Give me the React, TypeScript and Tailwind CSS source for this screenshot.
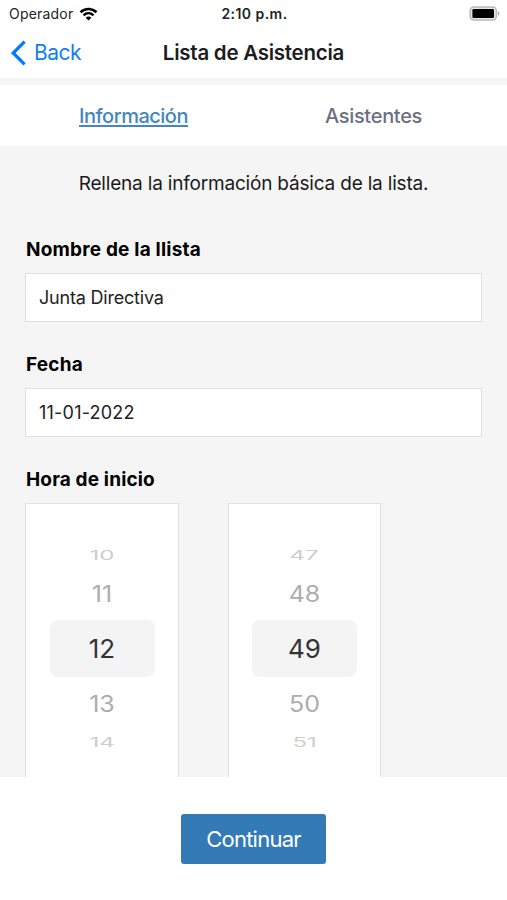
import clsx from "clsx";

type Field = { label: string; value: string; className?: string };

const fields: Field[] = [
  { label: "Nombre de la llista", value: "Junta Directiva", className: "tracking-[-0.2px]" },
  { label: "Fecha", value: "11-01-2022", className: "tracking-[0.22px]" },
];

const hours = ["10", "11", "12", "13", "14"];
const minutes = ["47", "48", "49", "50", "51"];

// height and vertical squash of each wheel row, from top to bottom
const rowStyles = [
  "h-[26px] text-[25px] text-[#cdcdcd] scale-x-[0.96] scale-y-[0.5]",
  "h-[52px] text-[25px] text-[#adadad] scale-y-[0.9]",
  "h-[57px] text-[26px] text-[#333]",
  "h-[54px] text-[25px] text-[#adadad] scale-y-[0.9]",
  "h-[22px] text-[25px] text-[#cdcdcd] scale-x-[0.96] scale-y-[0.5]",
];

function StatusBar() {
  return (
    <div className="grid h-7 grid-cols-[1fr_auto_1fr] items-center pl-[9px] pr-[7px] text-[14px] leading-none text-[#222]">
      <div className="flex items-center gap-[6px]">
        <span className="tracking-[0.2px]">Operador</span>
        <svg className="-mt-px" width="19" height="14" viewBox="0 0 18 14" fill="none">
          <path d="M1 5.2C5.5 .9 12.5 .9 17 5.2" stroke="#000" strokeWidth="2.6" />
          <path d="M4 8.3C6.9 5.6 11.1 5.6 14 8.3" stroke="#000" strokeWidth="2.4" />
          <path d="M9 13.6 6.1 10.7C7.7 9.2 10.3 9.2 11.9 10.7Z" fill="#000" />
        </svg>
      </div>
      <span className="text-center font-semibold tracking-[0.45px] whitespace-nowrap">2:10 p.m.</span>
      <svg className="-mt-px justify-self-end" width="31" height="15" viewBox="0 0 31 15">
        <rect x="1.2" y="1" width="26.2" height="13" rx="4" fill="#e8e8e8" stroke="#b9b9b9" strokeWidth="1.6" />
        <rect x="3.4" y="3.1" width="21.6" height="8.8" rx="1.2" fill="#000" />
        <path d="M29 5c1.9.9 1.9 3.9 0 4.8Z" fill="#a8a8a8" />
      </svg>
    </div>
  );
}

function NavBar() {
  return (
    <header className="grid h-[50px] grid-cols-[1fr_auto_1fr] items-center px-[10px]">
      <button className="flex items-center gap-[8px] text-[#0f7fee]">
        <svg width="16" height="26" viewBox="0 0 16 26" fill="none">
          <path d="M14.6 1.6 3.2 13l11.4 11.4" stroke="#007aff" strokeWidth="3.2" />
        </svg>
        <span className="pb-px text-[21px] leading-none tracking-[-0.55px]">Back</span>
      </button>
      <h1 className="text-[20.5px] leading-none font-semibold tracking-[-0.25px] text-[#1c1c1e]">
        Lista de Asistencia
      </h1>
    </header>
  );
}

function Wheel({ values }: { values: string[] }) {
  return (
    <div className="flex h-[300px] flex-col items-center border border-[#e0e0e0] bg-white pt-[38px]">
      {values.map((value, i) => (
        <div
          key={value}
          className={clsx("flex w-[105px] shrink-0 items-center justify-center rounded-lg", i === 2 && "bg-[#f4f4f4]")}
        >
          <span className={clsx("flex items-center leading-none", rowStyles[i])}>{value}</span>
        </div>
      ))}
    </div>
  );
}

export default function App() {
  return (
    <div className="flex h-[900px] w-[507px] flex-col overflow-hidden bg-white font-['Inter',sans-serif]">
      <StatusBar />
      <NavBar />
      <nav className="grid h-[68px] grid-cols-[267px_213px] border-t-[7px] border-[#f5f5f5] text-[20px] leading-none font-medium">
        <button className="tracking-[-0.5px] text-[#4287bf] underline decoration-[1.5px] underline-offset-[2px]">
          Información
        </button>
        <button className="tracking-[-0.3px] text-[#6b7080]">Asistentes</button>
      </nav>

      <main className="h-[631px] shrink-0 overflow-hidden bg-[#f5f5f5] px-[25px] pt-[26px]">
        <p className="text-center text-[19px] leading-6 tracking-[-0.19px] text-[#1a1a1a]">
          Rellena la información básica de la lista.
        </p>
        <div className="mt-[42px] flex flex-col gap-[31px]">
          {fields.map((field) => (
            <div key={field.label}>
              <label className="block h-[35px] pl-px text-[19px] leading-6 font-bold tracking-[0.2px] text-black">
                {field.label}
              </label>
              <input
                className={clsx(
                  "block h-[49px] w-full border border-[#dfdfdf] bg-white px-[13px] text-[18px] text-[#222] outline-none",
                  field.className
                )}
                defaultValue={field.value}
              />
            </div>
          ))}
          <div>
            <label className="block h-[35px] pl-px text-[19px] leading-6 font-bold tracking-[0.15px] text-black">
              Hora de inicio
            </label>
            <div className="grid grid-cols-[154px_153px] gap-[49px]">
              <Wheel values={hours} />
              <Wheel values={minutes} />
            </div>
          </div>
        </div>
      </main>

      <footer className="flex justify-center pt-[37px]">
        <button className="h-[50px] w-[145px] rounded-[3px] bg-[#337ab7] text-[22px] leading-none tracking-[-0.75px] text-white">
          Continuar
        </button>
      </footer>
    </div>
  );
}
